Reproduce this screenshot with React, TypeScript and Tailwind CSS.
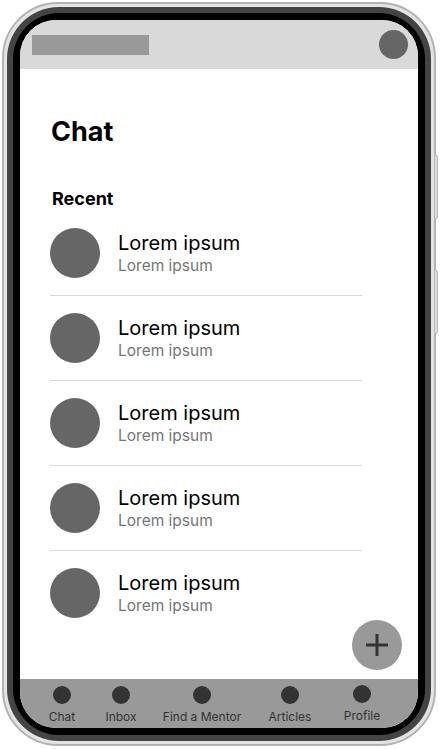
import React from "react";

const rows = [0, 1, 2, 3, 4];

function NavItem({ label, w, ml, pt }: { label: string; w: string; ml: string; pt: string }) {
  return (
    <div className={`flex flex-col items-center ${w} ${ml} ${pt}`}>
      <div className="w-[18px] h-[18px] rounded-full bg-[#333333]" />
      <div className="mt-[5px] text-[12px] leading-[15px] text-[#333333] whitespace-nowrap">{label}</div>
    </div>
  );
}

export default function App() {
  return (
    <div
      className="w-[440px] h-[749px] bg-white pt-[2px] pl-[2px]"
      style={{ fontFamily: "Inter, 'Noto Sans', sans-serif" }}
    >
      <div className="relative w-[434px] h-[744px] rounded-[56px] border-2 border-[#b3b3b3] bg-[#e4e4e4] p-[3px]">
        <div className="absolute right-[-4px] top-[151px] w-[4px] h-[64px] rounded-r-[2px] bg-[#dedede] border border-[#b8b8b8]" />
        <div className="absolute right-[-4px] top-[266px] w-[4px] h-[64px] rounded-r-[2px] bg-[#dedede] border border-[#b8b8b8]" />
        <div className="h-full rounded-[52px] bg-[#444444] p-[6px]">
          <div className="h-full rounded-[46px] bg-black p-[7px]">
            <div className="h-full rounded-[36px] overflow-hidden bg-white flex flex-col">
              {/* status bar */}
              <div className="h-[49px] shrink-0 bg-[#d9d9d9] flex items-center justify-between pl-[12px] pr-[10px]">
                <div className="w-[117px] h-[20px] bg-[#999999]" />
                <div className="w-[29px] h-[29px] rounded-full bg-[#666666]" />
              </div>
              {/* content */}
              <div className="relative flex-1 flex flex-col">
                <div className="pt-[46px] pl-[31px] text-[27px] leading-[33px] font-bold text-black">Chat</div>
                <div className="mt-[40px] pl-[32px] text-[18px] leading-[21px] font-bold text-black">Recent</div>
                <div className="mt-[2px] pl-[30px] w-[342px] flex flex-col">
                  {rows.map((r) => (
                    <div key={r} className="flex flex-col">
                      <div className="h-[84px] flex items-center">
                        <div className="w-[50px] h-[50px] rounded-full bg-[#666666] shrink-0" />
                        <div className="ml-[18px] flex flex-col">
                          <div className="text-[20px] leading-[24px] text-black">Lorem ipsum</div>
                          <div className="mt-[1px] text-[15.5px] leading-[19px] text-[#767676]">Lorem ipsum</div>
                        </div>
                      </div>
                      {r < 4 && <div className="h-px bg-[#d9d9d9]" />}
                    </div>
                  ))}
                </div>
                <div className="absolute right-[16px] bottom-[9px] w-[50px] h-[50px] rounded-full bg-[#999999] flex items-center justify-center">
                  <svg width="24" height="24" viewBox="0 0 24 24">
                    <path d="M12 1 V23 M1 12 H23" stroke="#333333" strokeWidth="3" fill="none" />
                  </svg>
                </div>
              </div>
              {/* nav bar */}
              <div className="h-[49px] shrink-0 bg-[#999999] flex items-start">
                <NavItem label="Chat" w="w-[50px]" ml="ml-[17px]" pt="pt-[7px]" />
                <NavItem label="Inbox" w="w-[50px]" ml="ml-[9px]" pt="pt-[7px]" />
                <NavItem label="Find a Mentor" w="w-[90px]" ml="ml-[11px]" pt="pt-[7px]" />
                <NavItem label="Articles" w="w-[60px]" ml="ml-[13px]" pt="pt-[7px]" />
                <NavItem label="Profile" w="w-[60px]" ml="ml-[12px]" pt="pt-[6px]" />
              </div>
            </div>
          </div>
        </div>
      </div>
    </div>
  );
}
